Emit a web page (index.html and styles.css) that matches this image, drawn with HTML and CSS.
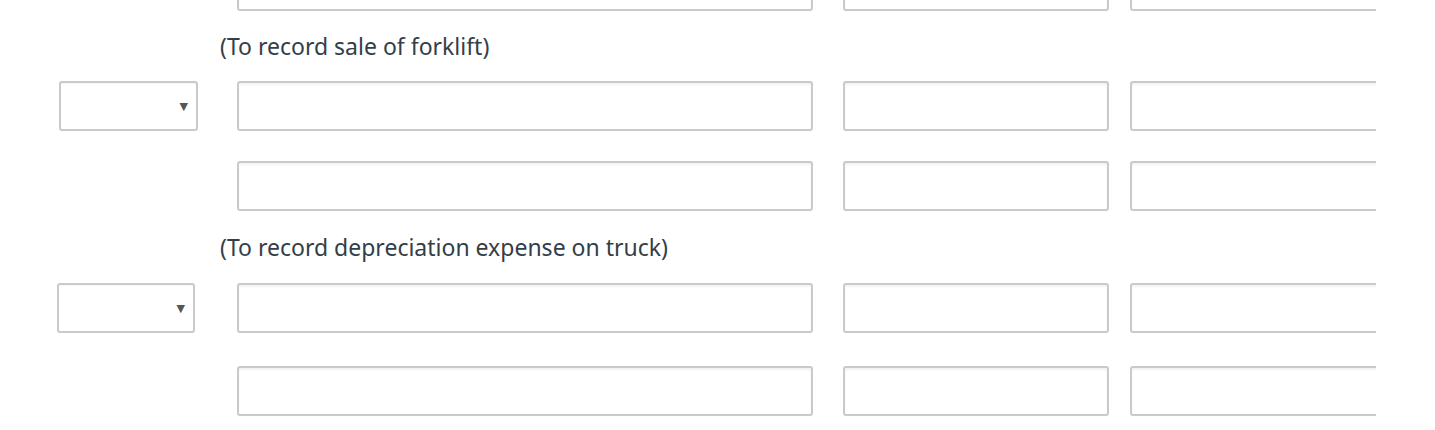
FILE: index.html
```html
<!DOCTYPE html>
<html>
<head>
<meta charset="utf-8">
<link rel="stylesheet" href="styles.css">
</head>
<body>
<div class="sheet">
  <div class="row row-top">
    <div class="sel-col"></div>
    <div class="field account"></div>
    <div class="field debit"></div>
    <div class="field credit"></div>
  </div>
  <div class="label label-1">(To record sale of forklift)</div>
  <div class="row">
    <div class="sel-col"><div class="select s1"><span class="arrow">▼</span></div></div>
    <div class="field account"></div>
    <div class="field debit"></div>
    <div class="field credit"></div>
  </div>
  <div class="row gap-30">
    <div class="sel-col"></div>
    <div class="field account"></div>
    <div class="field debit"></div>
    <div class="field credit"></div>
  </div>
  <div class="label label-2">(To record depreciation expense on truck)</div>
  <div class="row">
    <div class="sel-col"><div class="select s2"><span class="arrow">▼</span></div></div>
    <div class="field account"></div>
    <div class="field debit"></div>
    <div class="field credit"></div>
  </div>
  <div class="row gap-33">
    <div class="sel-col"></div>
    <div class="field account"></div>
    <div class="field debit"></div>
    <div class="field credit"></div>
  </div>
</div>
</body>
</html>
```
FILE: styles.css
```css
html, body {
  margin: 0;
  padding: 0;
  background: #fff;
}
body {
  font-family: "Noto Sans", "Open Sans", sans-serif;
  color: #333e48;
  overflow: hidden;
}
.sheet {
  width: 1376px;
  overflow: hidden;
  margin-top: -39px;
}
.row {
  display: flex;
  height: 50px;
  box-sizing: border-box;
}
.gap-30 { margin-top: 30px; }
.gap-33 { margin-top: 33px; }
.sel-col {
  width: 237px;
  flex: none;
  position: relative;
}
.field, .select {
  box-sizing: border-box;
  height: 50px;
  border: 2px solid #cacaca;
  border-radius: 3px;
  background: #fff;
  box-shadow: inset 0 2px 2px rgba(0, 0, 0, 0.05);
  flex: none;
}
.account { width: 576px; }
.debit { width: 266px; margin-left: 30px; }
.credit { width: 300px; margin-left: 21px; }
.select {
  display: flex;
  align-items: center;
  justify-content: flex-end;
  padding-right: 8px;
  box-shadow: inset 0 1px 1px rgba(0, 0, 0, 0.04);
}
.s1 { width: 139px; margin-left: 59px; }
.s2 { width: 138px; margin-left: 57px; }
.arrow {
  font-family: "DejaVu Sans", sans-serif;
  font-size: 11px;
  color: #555;
  line-height: 1;
}
.label {
  font-size: 23px;
  padding-left: 220px;
  box-sizing: border-box;
  display: flex;
  align-items: center;
  white-space: nowrap;
}
.label-1 { height: 70px; }
.label-2 { height: 72px; }
```
